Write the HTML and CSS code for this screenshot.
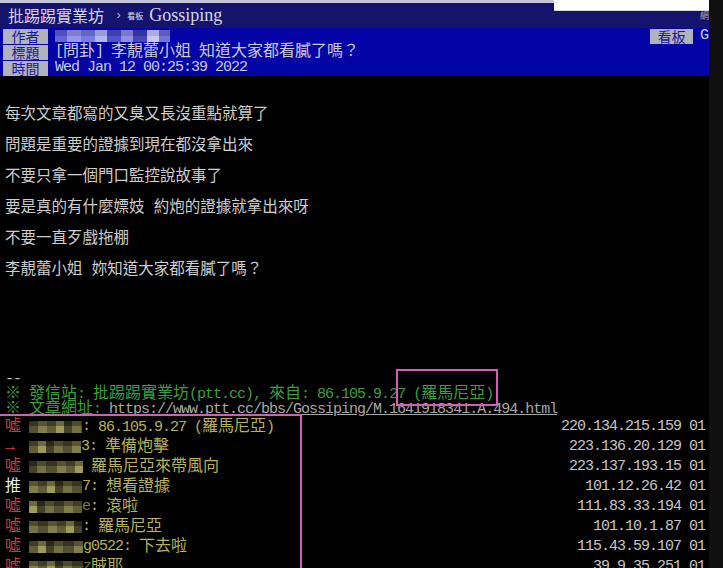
FILE: index.html
```html
<!DOCTYPE html>
<html lang="zh-Hant">
<head>
    <meta charset="UTF-8">
    <meta name="viewport" content="width=device-width, initial-scale=1.0">
    <title>[問卦] 李靚蕾小姐 知道大家都看膩了嗎？ - 看板 Gossiping</title>
    <link rel="stylesheet" href="styles.css">
</head>
<body>
    <div class="screen">
        <div class="page">
            <div class="topbar">
                <span class="site">批踢踢實業坊</span>
                <span class="sep">›</span>
                <span class="board-tag">看板</span>
                <span class="board-name">Gossiping</span>
                <span class="toplink">網</span>
            </div>
            <div class="search"></div>

            <div class="meta">
                <div class="meta-row">
                    <span class="label">作者</span>
                    <span class="value"><i class="mz blue"></i></span>
                    <span class="meta-right">
                        <span class="label small">看板</span>
                        <span class="value en">Gossiping</span>
                    </span>
                </div>
                <div class="meta-row">
                    <span class="label">標題</span>
                    <span class="value"><span class="en">[</span>問卦<span class="en">] </span>李靚蕾小姐<span class="en"> </span>知道大家都看膩了嗎？</span>
                </div>
                <div class="meta-row">
                    <span class="label">時間</span>
                    <span class="value en">Wed Jan 12 00:25:39 2022</span>
                </div>
            </div>

            <div class="article">
                <div>每次文章都寫的又臭又長沒重點就算了</div>
                <div>問題是重要的證據到現在都沒拿出來</div>
                <div>不要只拿一個門口監控說故事了</div>
                <div>要是真的有什麼嫖妓 約炮的證據就拿出來呀</div>
                <div>不要一直歹戲拖棚</div>
                <div>李靚蕾小姐 妳知道大家都看膩了嗎？</div>
            </div>

            <div class="sign">
                <div class="en">--</div>
                <div class="green">※<span class="en"> </span>發信站<span class="en">: </span>批踢踢實業坊<span class="en">(ptt.cc), </span>來自<span class="en">: 86.105.9.27 (</span>羅馬尼亞<span class="en">)</span></div>
                <div class="green">※<span class="en"> </span>文章網址<span class="en">: </span><span class="en url">https://www.ptt.cc/bbs/Gossiping/M.1641918341.A.494.html</span></div>
            </div>

            <div class="pushes">
                <div class="push">
                    <span class="tag">噓</span>
                    <span class="uid"><i class="mz w53"></i></span>
                    <span class="en">: </span><span class="txt"><span class="en">86.105.9.27 (</span>羅馬尼亞<span class="en">)</span></span>
                    <span class="ip en">220.134.215.159 01</span>
                </div>
                <div class="push">
                    <span class="tag">→</span>
                    <span class="uid"><i class="mz w52 v2"></i><span class="en">3</span></span>
                    <span class="en">: </span><span class="txt">準備炮擊</span>
                    <span class="ip en">223.136.20.129 01</span>
                </div>
                <div class="push">
                    <span class="tag">噓</span>
                    <span class="uid"><i class="mz w54 v3"></i></span>
                    <span class="en"> </span><span class="txt">羅馬尼亞來帶風向</span>
                    <span class="ip en">223.137.193.15 01</span>
                </div>
                <div class="push">
                    <span class="tag good">推</span>
                    <span class="uid"><i class="mz w53 v4"></i><span class="en">7</span></span>
                    <span class="en">: </span><span class="txt">想看證據</span>
                    <span class="ip en">101.12.26.42 01</span>
                </div>
                <div class="push">
                    <span class="tag">噓</span>
                    <span class="uid"><i class="mz w53 v5"></i><span class="en dim">e</span></span>
                    <span class="en">: </span><span class="txt">滾啦</span>
                    <span class="ip en">111.83.33.194 01</span>
                </div>
                <div class="push">
                    <span class="tag">噓</span>
                    <span class="uid"><i class="mz w53 v6"></i></span>
                    <span class="en">: </span><span class="txt">羅馬尼亞</span>
                    <span class="ip en">101.10.1.87 01</span>
                </div>
                <div class="push">
                    <span class="tag">噓</span>
                    <span class="uid"><i class="mz w54 v2"></i><span class="en">g0522</span></span>
                    <span class="en">: </span><span class="txt">下去啦</span>
                    <span class="ip en">115.43.59.107 01</span>
                </div>
                <div class="push">
                    <span class="tag">噓</span>
                    <span class="uid"><i class="mz w54 v4"></i><span class="en dim">z</span></span>
                    <span class="txt">賊耶</span>
                    <span class="ip en">39.9.35.251 01</span>
                </div>
            </div>

            <div class="mark mark-ip"></div>
            <div class="mark mark-pushes"></div>
        </div>
        <div class="rail"></div>
    </div>
</body>
</html>
```

FILE: styles.css
```css
body {
    margin: 0;
    background-color: #000;
    overflow: hidden;
}

.screen {
    display: flex;
    width: 723px;
    height: 568px;
    overflow: hidden;
    font-family: "Liberation Mono", "Noto Sans CJK TC", monospace;
    font-size: 16px;
    color: #c8c8c8;
}

.page {
    position: relative;
    flex: 1;
    min-width: 0;
    overflow: hidden;
    background-color: #000;
}

.rail {
    width: 14px;
    background-color: #101010;
}

.en {
    font-family: "Liberation Mono", monospace;
    font-size: 15px;
    letter-spacing: -1px;
    white-space: pre;
}

/* top bar */
.topbar {
    display: flex;
    align-items: center;
    height: 25px;
    border-top: 3px solid #c6c6dc;
    background-color: #14146c;
    padding-left: 8px;
    color: #d6d6e6;
    white-space: nowrap;
}

.site {
    font-family: "Noto Sans CJK TC", sans-serif;
    font-size: 16px;
    line-height: 25px;
}

.sep {
    margin: 0 5px 0 11px;
    font-size: 12px;
    color: #b4b4cc;
}

.board-tag {
    font-family: "Noto Sans CJK TC", sans-serif;
    font-size: 8px;
    color: #e0e0ee;
}

.board-name {
    margin-left: 6px;
    font-family: "Liberation Serif", serif;
    font-size: 18px;
}

.toplink {
    align-self: flex-start;
    margin: 8px 0 0 auto;
    font-family: "Noto Sans CJK TC", sans-serif;
    font-size: 9px;
    line-height: 10px;
    color: #a8a8bc;
}

.search {
    position: absolute;
    top: 0;
    right: 0;
    width: 155px;
    height: 10px;
    background-color: #fff;
    border-bottom: 1px solid #d4d4d4;
}

/* article meta */
.meta {
    background-color: #0303a6;
}

.meta-row {
    display: flex;
    align-items: center;
    height: 16px;
    white-space: nowrap;
}

.label {
    width: 45px;
    height: 15px;
    margin-left: 3px;
    overflow: hidden;
    background-color: #b2b2bc;
    color: #1818a2;
    text-align: center;
    font-family: "Noto Sans CJK TC", sans-serif;
    font-size: 14px;
    line-height: 15px;
}

.label.small {
    width: 43px;
    margin-left: 0;
}

.value {
    display: flex;
    align-items: center;
    margin-left: 7px;
    color: #cbcbd8;
    line-height: 16px;
}

.meta-right {
    display: flex;
    align-items: center;
    margin-left: auto;
    margin-right: -63px;
}

/* mosaic over user ids */
.mz {
    display: inline-block;
    height: 12px;
    background-image:
        linear-gradient(180deg, rgba(0, 0, 0, 0.3) 0 45%, rgba(255, 255, 255, 0.04) 45% 100%),
        linear-gradient(90deg, #4c4a2a 0 9px, #7c7944 9px 18px, #5a5830 18px 27px, #9a9654 27px 35px, #3c3b20 35px 43px, #6e6b3a 43px 52px, #4a4828 52px 60px);
}

.mz.v2 { background-position: 0 0, -18px 0; }
.mz.v3 { background-position: 0 0, -35px 0; }
.mz.v4 { background-position: 0 0, -9px 0; }
.mz.v5 { background-position: 0 0, -27px 0; }
.mz.v6 { background-position: 0 0, -43px 0; }

.mz.w52 { width: 52px; }
.mz.w53 { width: 53px; }
.mz.w54 { width: 54px; }

.mz.blue {
    width: 115px;
    height: 12px;
    background-image:
        linear-gradient(180deg, rgba(0, 0, 0, 0.12) 0 50%, rgba(255, 255, 255, 0.06) 50% 100%),
        linear-gradient(90deg, #5a5ad8 0 12px, #9090ee 12px 26px, #7272e2 26px 40px, #b0b0f8 40px 52px, #4646c8 52px 66px, #8888ea 66px 78px, #3a3abc 78px 92px, #c4c4ff 92px 104px, #6a6ad8 104px 115px);
}

/* article body */
.article {
    padding: 24px 0 0 5px;
    font-size: 15.5px;
    line-height: 31px;
    color: #cecece;
    white-space: nowrap;
}

/* signature */
.sign {
    margin-top: 86px;
    padding-left: 5px;
    line-height: 15px;
    white-space: nowrap;
}

.green {
    color: #3e9e3e;
}

.url {
    color: #a8a8a8;
    text-decoration: underline;
}

/* pushes */
.push {
    display: flex;
    align-items: center;
    height: 20px;
    padding: 0 4px 0 5px;
    line-height: 20px;
    white-space: nowrap;
    color: #b8b25c;
}

.tag {
    width: 24px;
    color: #d23a3a;
}

.tag.good {
    color: #ececec;
}

.uid {
    display: flex;
    align-items: center;
    color: #b8b25c;
}

.dim {
    color: #7c7842;
}

.txt {
    color: #b8b25c;
}

.ip {
    margin-left: auto;
    color: #c6c6c6;
}

/* hand-drawn annotation boxes */
.mark {
    position: absolute;
    border: 2px solid #d95cb4;
}

.mark-ip {
    left: 396px;
    top: 369px;
    width: 98px;
    height: 33px;
}

.mark-pushes {
    left: -10px;
    top: 414px;
    width: 308px;
    height: 200px;
}
```
